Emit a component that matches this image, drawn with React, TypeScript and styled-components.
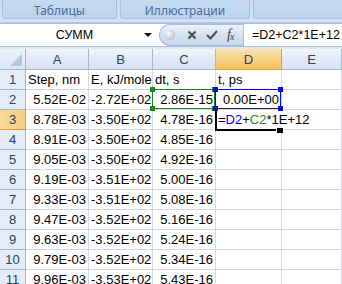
import React from "react";
import styled, { createGlobalStyle } from "styled-components";

const GlobalStyle = createGlobalStyle`
  html, body {
    margin: 0;
    padding: 0;
    background: #ffffff;
    overflow: hidden;
  }
`;

const Window = styled.div`
  width: 342px;
  height: 284px;
  overflow: hidden;
  display: flex;
  flex-direction: column;
  background: #dfe8f5;
  font-family: "Liberation Sans", Arial, sans-serif;
`;

/* ribbon */

const Ribbon = styled.div`
  height: 23px;
  flex: none;
  display: flex;
  gap: 3px;
  padding-left: 2px;
  box-sizing: border-box;
  background: linear-gradient(#c9dbf1, #d4e2f4);
  border-bottom: 1px solid #b5c9e2;
`;

const Group = styled.div<{ $w: number }>`
  width: ${(p) => p.$w}px;
  flex: none;
  height: 19px;
  box-sizing: border-box;
  border: 1px solid #a7c0de;
  border-top: none;
  border-radius: 0 0 3px 3px;
  background: linear-gradient(#c6daf1, #bcd3ee);
  display: flex;
  align-items: center;
  justify-content: center;
  font-family: "Noto Sans", "Open Sans", sans-serif;
  font-size: 12px;
  color: #4a6a97;
  padding-top: 3px;
`;

/* formula bar */

const FormulaBar = styled.div`
  height: 24px;
  flex: none;
  display: flex;
  background: #ffffff;
  border-top: 1px solid #a9bfdb;
  border-bottom: 1px solid #a9bfdb;
  box-sizing: border-box;
`;

const NameBox = styled.div`
  width: 159px;
  flex: none;
  position: relative;
  display: flex;
  align-items: center;
  justify-content: center;
  padding-right: 10px;
  box-sizing: border-box;
  font-size: 12.5px;
  color: #000;
`;

const DropArrow = styled.span`
  position: absolute;
  right: 7px;
  top: 9px;
  width: 0;
  height: 0;
  border-left: 4px solid transparent;
  border-right: 4px solid transparent;
  border-top: 4px solid #111;
`;

const Controls = styled.div`
  width: 84px;
  flex: none;
  display: flex;
  align-items: center;
  gap: 9px;
  padding-left: 5px;
  box-sizing: border-box;
  border: 1px solid #a6bcd9;
  border-right: none;
  border-radius: 12px 0 0 12px;
  background: linear-gradient(#eef3fa, #d3e0f0 55%, #c9d8ec);
`;

const Bubble = styled.span`
  width: 10px;
  height: 10px;
  border-radius: 50%;
  background: radial-gradient(circle at 35% 35%, #ffffff, #c6cbd3 60%, #9aa3b0);
  margin-right: 3px;
`;

const Fx = styled.span`
  font-family: "Liberation Serif", "Times New Roman", serif;
  font-style: italic;
  font-size: 14px;
  color: #3c3c3c;
  letter-spacing: -1px;
  sub {
    font-size: 10px;
    vertical-align: -1px;
  }
`;

const FormulaInput = styled.div`
  flex: 1;
  display: flex;
  align-items: center;
  padding-left: 8px;
  border-left: 1px solid #a6bcd9;
  font-size: 12.5px;
  color: #000;
  white-space: nowrap;
`;

/* sheet */

const Sheet = styled.div`
  margin-top: 2px;
  display: grid;
  grid-template-columns: 26px 63px 64px 63px 66px 1fr;
  grid-template-rows: 21px;
  grid-auto-rows: 20px;
  background: #ffffff;
  font-size: 13px;
`;

const Corner = styled.div`
  position: relative;
  box-sizing: border-box;
  background: linear-gradient(#eef3fa, #dce6f3);
  border-right: 1px solid #9eb6ce;
  border-bottom: 1px solid #9eb6ce;
  &::after {
    content: "";
    position: absolute;
    right: 3px;
    bottom: 3px;
    border-left: 12px solid transparent;
    border-bottom: 12px solid #b4c6dd;
  }
`;

const ColHead = styled.div<{ $sel?: boolean }>`
  box-sizing: border-box;
  display: flex;
  align-items: center;
  justify-content: center;
  color: #27415f;
  font-size: 13px;
  background: ${(p) =>
    p.$sel ? "linear-gradient(#fbe2ae, #f8d286 50%, #f4c15c)" : "linear-gradient(#f3f7fc, #e1e9f5 50%, #d9e4f2)"};
  border-right: 1px solid ${(p) => (p.$sel ? "#f29536" : "#9eb6ce")};
  border-bottom: 1px solid ${(p) => (p.$sel ? "#f29536" : "#9eb6ce")};
`;

const RowHead = styled.div<{ $sel?: boolean }>`
  box-sizing: border-box;
  display: flex;
  align-items: center;
  justify-content: center;
  color: #27415f;
  font-size: 13px;
  background: ${(p) => (p.$sel ? "linear-gradient(90deg, #fbd99b, #f8cd7e)" : "#e4ecf7")};
  border-right: 1px solid ${(p) => (p.$sel ? "#f29536" : "#9eb6ce")};
  border-bottom: 1px solid ${(p) => (p.$sel ? "#f29536" : "#9eb6ce")};
`;

const Cell = styled.div<{ $right?: boolean; $pos?: boolean }>`
  position: ${(p) => (p.$pos ? "relative" : "static")};
  box-sizing: border-box;
  border-right: 1px solid #d0d7e5;
  border-bottom: 1px solid #d0d7e5;
  padding: 0 2px;
  line-height: 19px;
  text-align: ${(p) => (p.$right ? "right" : "left")};
  white-space: nowrap;
  overflow: ${(p) => (p.$pos ? "visible" : "hidden")};
  color: #000;
`;

const RefBox = styled.div<{ $c: string }>`
  position: absolute;
  left: -1px;
  top: -1px;
  right: 0;
  bottom: 0;
  border: 1px solid ${(p) => p.$c};
  z-index: 3;
  pointer-events: none;
`;

const Knob = styled.span<{ $c: string; $x: "l" | "r"; $y: "t" | "b" }>`
  position: absolute;
  width: 5px;
  height: 5px;
  background: ${(p) => p.$c};
  ${(p) => (p.$x === "l" ? "left: -3px;" : "right: -3px;")}
  ${(p) => (p.$y === "t" ? "top: -3px;" : "bottom: -3px;")}
`;

const YellowMark = styled.div`
  position: absolute;
  left: 0;
  right: 0;
  bottom: -1px;
  height: 2px;
  background: #f5ee3a;
  z-index: 2;
`;

const Editor = styled.div`
  position: absolute;
  left: 0;
  top: 0;
  width: 93px;
  height: 19px;
  background: #ffffff;
  padding-left: 2px;
  box-sizing: border-box;
  display: flex;
  align-items: center;
  z-index: 2;
`;

const Ref = styled.span<{ $c: string }>`
  color: ${(p) => p.$c};
`;

const Caret = styled.span`
  display: inline-block;
  width: 1px;
  height: 15px;
  background: #000;
  margin-left: 1px;
`;

const ActiveBorder = styled.div`
  position: absolute;
  left: -1px;
  top: -1px;
  width: 66px;
  height: 22px;
  box-sizing: border-box;
  border-left: 2px solid #000;
  border-bottom: 2px solid #000;
  z-index: 3;
`;

const FillHandle = styled.span`
  position: absolute;
  right: -3px;
  bottom: -4px;
  width: 6px;
  height: 5px;
  background: #000;
  border: 1px solid #fff;
  border-bottom: none;
`;

const colA = ["5.52E-02", "8.78E-03", "8.91E-03", "9.05E-03", "9.19E-03", "9.33E-03", "9.47E-03", "9.63E-03", "9.79E-03", "9.96E-03"];
const colB = ["-2.72E+02", "-3.50E+02", "-3.50E+02", "-3.50E+02", "-3.51E+02", "-3.51E+02", "-3.52E+02", "-3.52E+02", "-3.52E+02", "-3.53E+02"];
const colC = ["2.86E-15", "4.78E-16", "4.85E-16", "4.92E-16", "5.00E-16", "5.08E-16", "5.16E-16", "5.24E-16", "5.34E-16", "5.43E-16"];

const GREEN = "#1a8a1a";
const BLUE = "#0000ff";

const Knobs = ({ c }: { c: string }) => (
  <>
    <Knob $c={c} $x="l" $y="t" />
    <Knob $c={c} $x="r" $y="t" />
    <Knob $c={c} $x="l" $y="b" />
    <Knob $c={c} $x="r" $y="b" />
  </>
);

const App = () => {
  const rows = colA.map((a, i) => {
    const n = i + 2;
    return (
      <React.Fragment key={n}>
        <RowHead $sel={n === 3}>{n}</RowHead>
        <Cell $right>{a}</Cell>
        <Cell $right>{colB[i]}</Cell>
        {n === 2 ? (
          <Cell $right $pos>
            {colC[i]}
            <RefBox $c={GREEN}>
              <Knobs c={GREEN} />
            </RefBox>
          </Cell>
        ) : (
          <Cell $right>{colC[i]}</Cell>
        )}
        {n === 2 && (
          <Cell $right $pos>
            0.00E+00
            <YellowMark />
            <RefBox $c={BLUE}>
              <Knobs c={BLUE} />
            </RefBox>
          </Cell>
        )}
        {n === 3 && (
          <Cell $pos>
            <Editor>
              =<Ref $c={BLUE}>D2</Ref>+<Ref $c={GREEN}>C2</Ref>*1E+12
              <Caret />
            </Editor>
            <ActiveBorder>
              <FillHandle />
            </ActiveBorder>
          </Cell>
        )}
        {n > 3 && <Cell />}
        <Cell />
      </React.Fragment>
    );
  });

  return (
    <Window>
      <GlobalStyle />
      <Ribbon>
        <Group $w={115}>Таблицы</Group>
        <Group $w={130}>Иллюстрации</Group>
        <Group $w={100} />
      </Ribbon>
      <FormulaBar>
        <NameBox>
          СУММ
          <DropArrow />
        </NameBox>
        <Controls>
          <Bubble />
          <svg width="10" height="10" viewBox="0 0 10 10">
            <path d="M1.5 1.5 L8.5 8.5 M8.5 1.5 L1.5 8.5" stroke="#4a4a4a" strokeWidth="2" />
          </svg>
          <svg width="12" height="10" viewBox="0 0 12 10">
            <path d="M1 5 L4.5 8.5 L11 1" stroke="#4a4a4a" strokeWidth="2" fill="none" />
          </svg>
          <Fx>
            f<sub>x</sub>
          </Fx>
        </Controls>
        <FormulaInput>=D2+C2*1E+12</FormulaInput>
      </FormulaBar>
      <Sheet>
        <Corner />
        <ColHead>A</ColHead>
        <ColHead>B</ColHead>
        <ColHead>C</ColHead>
        <ColHead $sel>D</ColHead>
        <ColHead>E</ColHead>
        <RowHead>1</RowHead>
        <Cell>Step, nm</Cell>
        <Cell>E, kJ/mole</Cell>
        <Cell>dt, s</Cell>
        <Cell>t, ps</Cell>
        <Cell />
        {rows}
      </Sheet>
    </Window>
  );
};

export default App;
